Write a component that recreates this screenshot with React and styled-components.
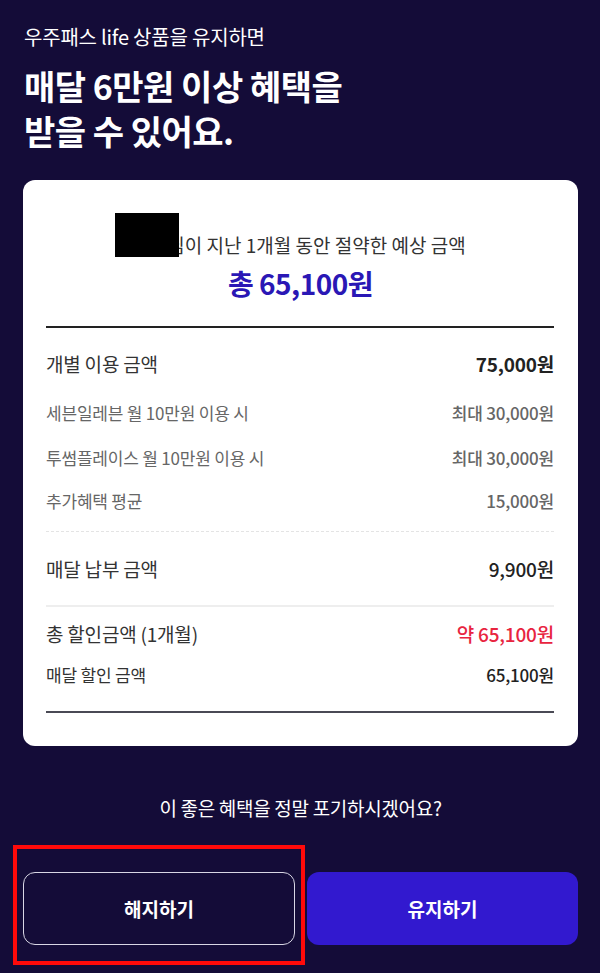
import React from "react";
import styled, { createGlobalStyle } from "styled-components";

const GlobalStyle = createGlobalStyle`
  body {
    margin: 0;
    background: #140c38;
    font-family: "Noto Sans CJK KR", "Noto Sans", sans-serif;
  }
`;

const details = [
  { label: "세븐일레븐 월 10만원 이용 시", value: "최대 30,000원", top: 25 },
  { label: "투썸플레이스 월 10만원 이용 시", value: "최대 30,000원", top: 23 },
  { label: "추가혜택 평균", value: "15,000원", top: 21 },
];

function App() {
  return (
    <Page>
      <GlobalStyle />
      <Subtitle>우주패스 life 상품을 유지하면</Subtitle>
      <Title>
        매달 6만원 이상 혜택을
        <br />
        받을 수 있어요.
      </Title>

      <Card>
        <Intro>
          <Mask />
          <IntroText>님이 지난 1개월 동안 절약한 예상 금액</IntroText>
        </Intro>
        <Total>총 65,100원</Total>

        <Body>
          <Divider />
          <Section $top={23} $bottom={19}>
            <Row>
              <Label>개별 이용 금액</Label>
              <Value $bold>75,000원</Value>
            </Row>
            {details.map((d) => (
              <Row key={d.label} $small $top={d.top}>
                <Label $muted>{d.label}</Label>
                <Value $muted>{d.value}</Value>
              </Row>
            ))}
          </Section>
          <Divider $dashed />
          <Section $top={24} $bottom={23}>
            <Row>
              <Label>매달 납부 금액</Label>
              <Value $semi>9,900원</Value>
            </Row>
          </Section>
          <Divider $light />
          <Section $top={14} $bottom={25}>
            <Row>
              <Label>총 할인금액 (1개월)</Label>
              <Value $red>약 65,100원</Value>
            </Row>
            <Row $small $top={17}>
              <Label>매달 할인 금액</Label>
              <Value>65,100원</Value>
            </Row>
          </Section>
          <Divider $thick />
        </Body>
      </Card>

      <Prompt>이 좋은 혜택을 정말 포기하시겠어요?</Prompt>

      <Buttons>
        <ButtonWrap>
          <Highlight />
          <Button $outline>해지하기</Button>
        </ButtonWrap>
        <Button>유지하기</Button>
      </Buttons>
    </Page>
  );
}

export default App;

const Page = styled.div`
  min-height: 973px;
  box-sizing: border-box;
  padding: 23px 22px 0 23px;
  background: #140c38;
  color: #fff;
`;

const Subtitle = styled.p`
  margin: 0 0 0 1px;
  font-size: 20px;
  line-height: 28px;
  letter-spacing: -0.2px;
  font-weight: 400;
`;

const Title = styled.h1`
  margin: 12px 0 0 1px;
  font-size: 34px;
  line-height: 45px;
  font-weight: 700;
  letter-spacing: -0.5px;
`;

const Card = styled.div`
  margin-top: 27px;
  background: #fff;
  border-radius: 12px;
  padding: 33px 0 33px;
  color: #222;
`;

const Intro = styled.div`
  display: flex;
  justify-content: center;
  align-items: flex-end;
  padding-right: 20px;
`;

const Mask = styled.span`
  position: relative;
  z-index: 1;
  width: 64px;
  height: 44px;
  margin-right: -12px;
  background: #000;
`;

const IntroText = styled.span`
  font-size: 19px;
  line-height: 26px;
  letter-spacing: 0;
  color: #333;
  margin-bottom: -1px;
`;

const Total = styled.div`
  margin-top: 8px;
  text-align: center;
  font-size: 28px;
  line-height: 36px;
  font-weight: 700;
  letter-spacing: -0.5px;
  color: #2a17b5;
`;

const Body = styled.div`
  margin-top: 25px;
  padding: 0 24px 0 23px;
`;

const Divider = styled.div`
  height: ${(p) => (p.$thick ? 2 : 1.5)}px;
  background: ${(p) =>
    p.$dashed ? "none" : p.$light ? "#eeeeee" : p.$thick ? "#4a4a55" : "#222"};
  border-top: ${(p) => (p.$dashed ? "1px dashed #e4e4e4" : "none")};
  ${(p) => p.$dashed && "height: 0;"}
  ${(p) => p.$light && "height: 2px;"}
`;

const Section = styled.div`
  display: flex;
  flex-direction: column;
  padding: ${(p) => p.$top}px 0 ${(p) => p.$bottom}px;
`;

const Row = styled.div`
  display: flex;
  justify-content: space-between;
  align-items: center;
  margin-top: ${(p) => p.$top || 0}px;
  font-size: ${(p) => (p.$small ? 17 : 19)}px;
  line-height: ${(p) => (p.$small ? 22 : 26)}px;
  letter-spacing: -0.2px;
`;

const Label = styled.span`
  color: ${(p) => (p.$muted ? "#666" : "#333")};
`;

const Value = styled.span`
  color: ${(p) => (p.$red ? "#e8243f" : p.$muted ? "#666" : "#222")};
  font-weight: ${(p) => (p.$bold ? 700 : 500)};
`;

const Prompt = styled.p`
  margin: 49px 0 0;
  text-align: center;
  font-size: 19px;
  line-height: 26px;
  letter-spacing: -0.3px;
`;

const Buttons = styled.div`
  margin-top: 51px;
  display: grid;
  grid-template-columns: 272px 1fr;
  gap: 12px;
`;

const ButtonWrap = styled.div`
  position: relative;
  display: flex;
`;

const Highlight = styled.div`
  position: absolute;
  left: -10px;
  top: -27px;
  width: 292px;
  height: 120px;
  box-sizing: border-box;
  border: 4px solid #ff0a0a;
  pointer-events: none;
`;

const Button = styled.button`
  flex: 1;
  height: 73px;
  border-radius: 12px;
  border: ${(p) => (p.$outline ? "1.5px solid #d8d6e4" : "none")};
  background: ${(p) => (p.$outline ? "#140c38" : "#3219cf")};
  color: #fff;
  font-family: inherit;
  font-size: 19px;
  font-weight: 700;
  letter-spacing: 0;
`;
